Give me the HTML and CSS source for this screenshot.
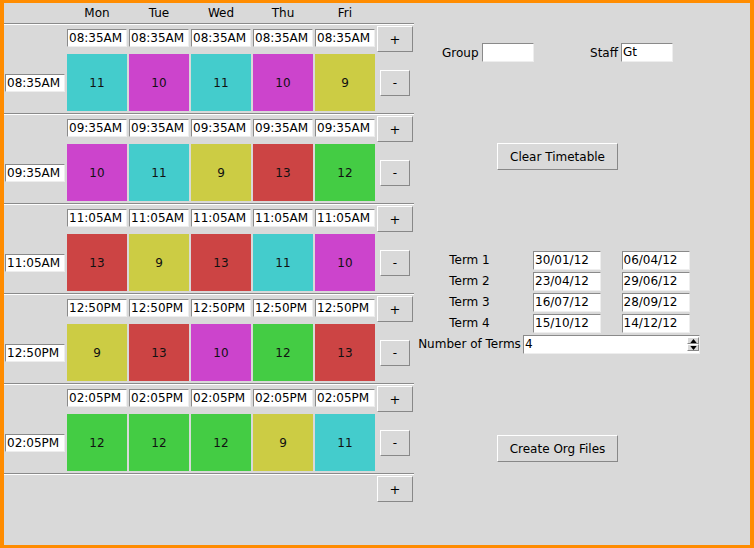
FILE: index.html
```html
<!DOCTYPE html>
<html>
<head>
<meta charset="utf-8">
<link rel="stylesheet" href="styles.css">
</head>
<body>
<div class="window">
  <div class="timetable">
    <div class="header">
      <span></span><span class="day">Mon</span><span class="day">Tue</span><span class="day">Wed</span><span class="day">Thu</span><span class="day">Fri</span><span></span>
    </div>

    <div class="sep"></div>
    <div class="grid">
      <span></span>
      <div class="entry start">08:35AM</div><div class="entry start">08:35AM</div><div class="entry start">08:35AM</div><div class="entry start">08:35AM</div><div class="entry start">08:35AM</div>
      <button class="btn plus">+</button>
      <div class="entry label">08:35AM</div>
      <div class="cell cyan">11</div><div class="cell magenta">10</div><div class="cell cyan">11</div><div class="cell magenta">10</div><div class="cell yellow">9</div>
      <button class="btn minus">-</button>
    </div>

    <div class="sep"></div>
    <div class="grid">
      <span></span>
      <div class="entry start">09:35AM</div><div class="entry start">09:35AM</div><div class="entry start">09:35AM</div><div class="entry start">09:35AM</div><div class="entry start">09:35AM</div>
      <button class="btn plus">+</button>
      <div class="entry label">09:35AM</div>
      <div class="cell magenta">10</div><div class="cell cyan">11</div><div class="cell yellow">9</div><div class="cell red">13</div><div class="cell green">12</div>
      <button class="btn minus">-</button>
    </div>

    <div class="sep"></div>
    <div class="grid">
      <span></span>
      <div class="entry start">11:05AM</div><div class="entry start">11:05AM</div><div class="entry start">11:05AM</div><div class="entry start">11:05AM</div><div class="entry start">11:05AM</div>
      <button class="btn plus">+</button>
      <div class="entry label">11:05AM</div>
      <div class="cell red">13</div><div class="cell yellow">9</div><div class="cell red">13</div><div class="cell cyan">11</div><div class="cell magenta">10</div>
      <button class="btn minus">-</button>
    </div>

    <div class="sep"></div>
    <div class="grid">
      <span></span>
      <div class="entry start">12:50PM</div><div class="entry start">12:50PM</div><div class="entry start">12:50PM</div><div class="entry start">12:50PM</div><div class="entry start">12:50PM</div>
      <button class="btn plus">+</button>
      <div class="entry label">12:50PM</div>
      <div class="cell yellow">9</div><div class="cell red">13</div><div class="cell magenta">10</div><div class="cell green">12</div><div class="cell red">13</div>
      <button class="btn minus">-</button>
    </div>

    <div class="sep"></div>
    <div class="grid">
      <span></span>
      <div class="entry start">02:05PM</div><div class="entry start">02:05PM</div><div class="entry start">02:05PM</div><div class="entry start">02:05PM</div><div class="entry start">02:05PM</div>
      <button class="btn plus">+</button>
      <div class="entry label">02:05PM</div>
      <div class="cell green">12</div><div class="cell green">12</div><div class="cell green">12</div><div class="cell yellow">9</div><div class="cell cyan">11</div>
      <button class="btn minus">-</button>
    </div>

    <div class="sep"></div>
    <div class="grid last">
      <span></span><span></span><span></span><span></span><span></span><span></span>
      <button class="btn plus">+</button>
    </div>
  </div>

  <div class="side">
    <div class="form">
      <div class="row">
        <div class="field"><span>Group</span><div class="entry small"></div></div>
        <div class="field"><span>Staff</span><div class="entry small">Gt</div></div>
      </div>
      <button class="btn wide">Clear Timetable</button>
      <div class="terms">
        <span class="term-label">Term 1</span><div class="entry date">30/01/12</div><div class="entry date">06/04/12</div>
        <span class="term-label">Term 2</span><div class="entry date">23/04/12</div><div class="entry date">29/06/12</div>
        <span class="term-label">Term 3</span><div class="entry date">16/07/12</div><div class="entry date">28/09/12</div>
        <span class="term-label">Term 4</span><div class="entry date">15/10/12</div><div class="entry date">14/12/12</div>
        <span class="term-label">Number of Terms</span>
        <div class="entry spin">
          <span>4</span>
          <span class="arrows">
            <span class="arrow"><svg width="8" height="5" viewBox="0 0 8 5"><polygon points="4,0 8,5 0,5" fill="#000"/></svg></span>
            <span class="arrow"><svg width="8" height="5" viewBox="0 0 8 5"><polygon points="0,0 8,0 4,5" fill="#000"/></svg></span>
          </span>
        </div>
      </div>
      <button class="btn wide">Create Org Files</button>
    </div>
  </div>
</div>
</body>
</html>
```

FILE: styles.css
```css
* { box-sizing: border-box; }
html, body { margin: 0; padding: 0; }
body {
  width: 754px;
  height: 548px;
  overflow: hidden;
  background: #ff8c00;
  font-family: "DejaVu Sans", sans-serif;
  font-size: 12px;
  color: #000;
}
.window {
  display: flex;
  width: 754px;
  height: 548px;
  border-style: solid;
  border-color: #ff8c00;
  border-width: 3px 4px 3px 4px;
  background: #d9d9d9;
}
.timetable { width: 410px; flex: none; }
.header {
  display: grid;
  grid-template-columns: 61px repeat(5, 60px) 37px;
  column-gap: 2px;
  height: 20px;
  align-items: center;
}
.day { text-align: center; line-height: 20px; }
.sep {
  height: 2px;
  border-top: 1px solid #8a8a8a;
  background: #ffffff;
}
.grid {
  display: grid;
  grid-template-columns: 61px repeat(5, 60px) 37px;
  grid-template-rows: 26px 57px;
  column-gap: 2px;
  row-gap: 2px;
  margin: 1px 0 2px;
}
.grid.last { grid-template-rows: 26px; }
.entry {
  background: #ffffff;
  height: 18px;
  border: 1px solid;
  border-color: #8a8a8a #eeeeee #eeeeee #8a8a8a;
  padding: 0 1px;
  line-height: 16px;
  white-space: nowrap;
  overflow: hidden;
}
.start { align-self: start; margin-top: 3px; }
.label { align-self: center; justify-self: end; width: 60px; }
.cell {
  display: flex;
  align-items: center;
  justify-content: center;
  color: #111;
}
.cyan { background: #44cccc; }
.magenta { background: #cc44cc; }
.yellow { background: #cccc44; }
.red { background: #cc4444; }
.green { background: #44cc44; }
.btn {
  font: inherit;
  color: #000;
  background: #d9d9d9;
  border: 1px solid;
  border-color: #ffffff #888888 #888888 #ffffff;
  padding: 0;
  margin: 0;
}
.plus { width: 36px; height: 26px; font-size: 13px; }
.minus { width: 30px; height: 26px; align-self: center; margin-left: 3px; }

.side { flex: 1; padding-top: 40px; }
.form {
  margin-left: 28px;
  width: 231px;
  display: flex;
  flex-direction: column;
  align-items: center;
}
.row {
  align-self: stretch;
  display: flex;
  justify-content: space-between;
}
.field { display: flex; align-items: center; gap: 3px; }
.entry.small { width: 52px; height: 19px; line-height: 17px; }
.wide {
  height: 27px;
  padding: 0 12px;
  margin-top: 81px;
}
.terms {
  align-self: flex-start;
  margin-left: -26px;
  margin-top: 81px;
  display: grid;
  grid-template-columns: 107px 88px 89px;
  grid-auto-rows: 19px;
  row-gap: 2px;
}
.term-label { text-align: center; line-height: 19px; white-space: nowrap; }
.entry.date { width: 68px; height: 19px; line-height: 17px; justify-self: center; }
.entry.spin {
  grid-column: span 2;
  height: 19px;
  line-height: 17px;
  display: flex;
  justify-content: space-between;
  padding-right: 0;
}
.arrows {
  display: flex;
  flex-direction: column;
  margin-top: 1px;
}
.arrow {
  width: 12px;
  height: 7px;
  background: #d9d9d9;
  border: 1px solid;
  border-color: #ffffff #888888 #888888 #ffffff;
  display: flex;
  align-items: center;
  justify-content: center;
}
.arrow svg { display: block; width: 7px; height: 4px; }
```
